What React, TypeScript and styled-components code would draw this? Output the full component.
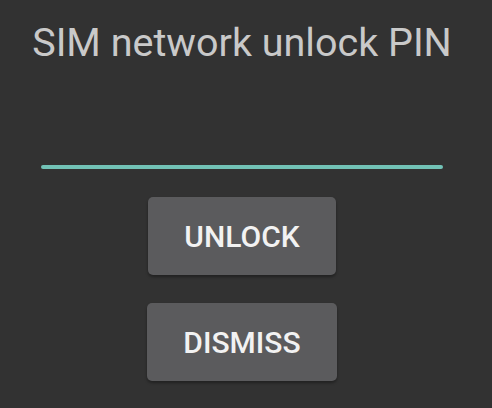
import styled, { createGlobalStyle } from "styled-components";

const GlobalStyle = createGlobalStyle`
  html, body {
    margin: 0;
    padding: 0;
    background: #323232;
  }
  body {
    font-family: Roboto, "Noto Sans", "Liberation Sans", sans-serif;
  }
`;

const App = () => {
  return (
    <Screen>
      <GlobalStyle />
      <Title>SIM network unlock PIN</Title>
      <PinField />
      <Actions>
        <ActionButton>UNLOCK</ActionButton>
        <ActionButton>DISMISS</ActionButton>
      </Actions>
    </Screen>
  );
};

export default App;

const Screen = styled.main`
  width: 492px;
  height: 408px;
  box-sizing: border-box;
  padding-right: 8px;
  display: flex;
  flex-direction: column;
  align-items: center;
  background: #323232;
  overflow: hidden;
`;
const Title = styled.h1`
  margin: 20px 0 0;
  font-size: 39.5px;
  font-weight: 400;
  line-height: 46px;
  color: #c9c9c9;
  letter-spacing: 0;
  white-space: nowrap;
`;
const PinField = styled.div`
  width: 402px;
  height: 4px;
  margin-top: 99px;
  background: #72c2b6;
  border-radius: 2px;
`;
const Actions = styled.div`
  display: flex;
  flex-direction: column;
  align-items: center;
  gap: 28px;
  margin-top: 28px;
`;
const ActionButton = styled.button`
  height: 78px;
  padding: 0 36px;
  border: none;
  border-radius: 5px;
  background: #5b5b5d;
  color: #f2f2f2;
  font-family: Roboto, "Noto Sans", "Liberation Sans", sans-serif;
  font-size: 30px;
  font-weight: 500;
  box-shadow: 0 2px 3px rgba(0, 0, 0, 0.35);
`;
